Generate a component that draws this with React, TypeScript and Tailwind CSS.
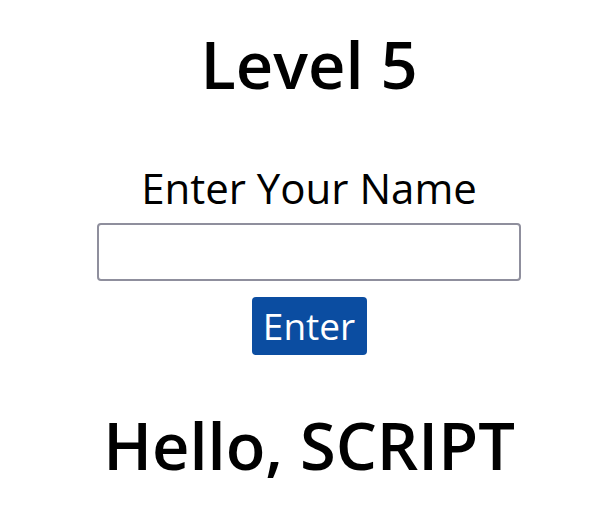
export default function App() {
  return (
    <div className="w-[604px] h-[515px] bg-white pl-[14px] flex flex-col items-center" style={{ fontFamily: '"Open Sans", sans-serif' }}>
      <h1 className="mt-[31px] text-[65px] leading-[66px] font-semibold text-black">Level 5</h1>
      <div className="mt-[70px] text-[42px] leading-[42px] text-black">Enter Your Name</div>
      <input type="text" className="mt-[14px] w-[424px] h-[58px] border-2 border-[#8f8f9d] rounded-[4px] bg-white" />
      <button className="mt-[16px] w-[115px] h-[58px] bg-[#0b4da1] rounded-[4px] text-white text-[37px] leading-[56px]">Enter</button>
      <h2 className="mt-[57px] text-[65px] leading-[66px] font-semibold text-black">Hello, SCRIPT</h2>
    </div>
  );
}
